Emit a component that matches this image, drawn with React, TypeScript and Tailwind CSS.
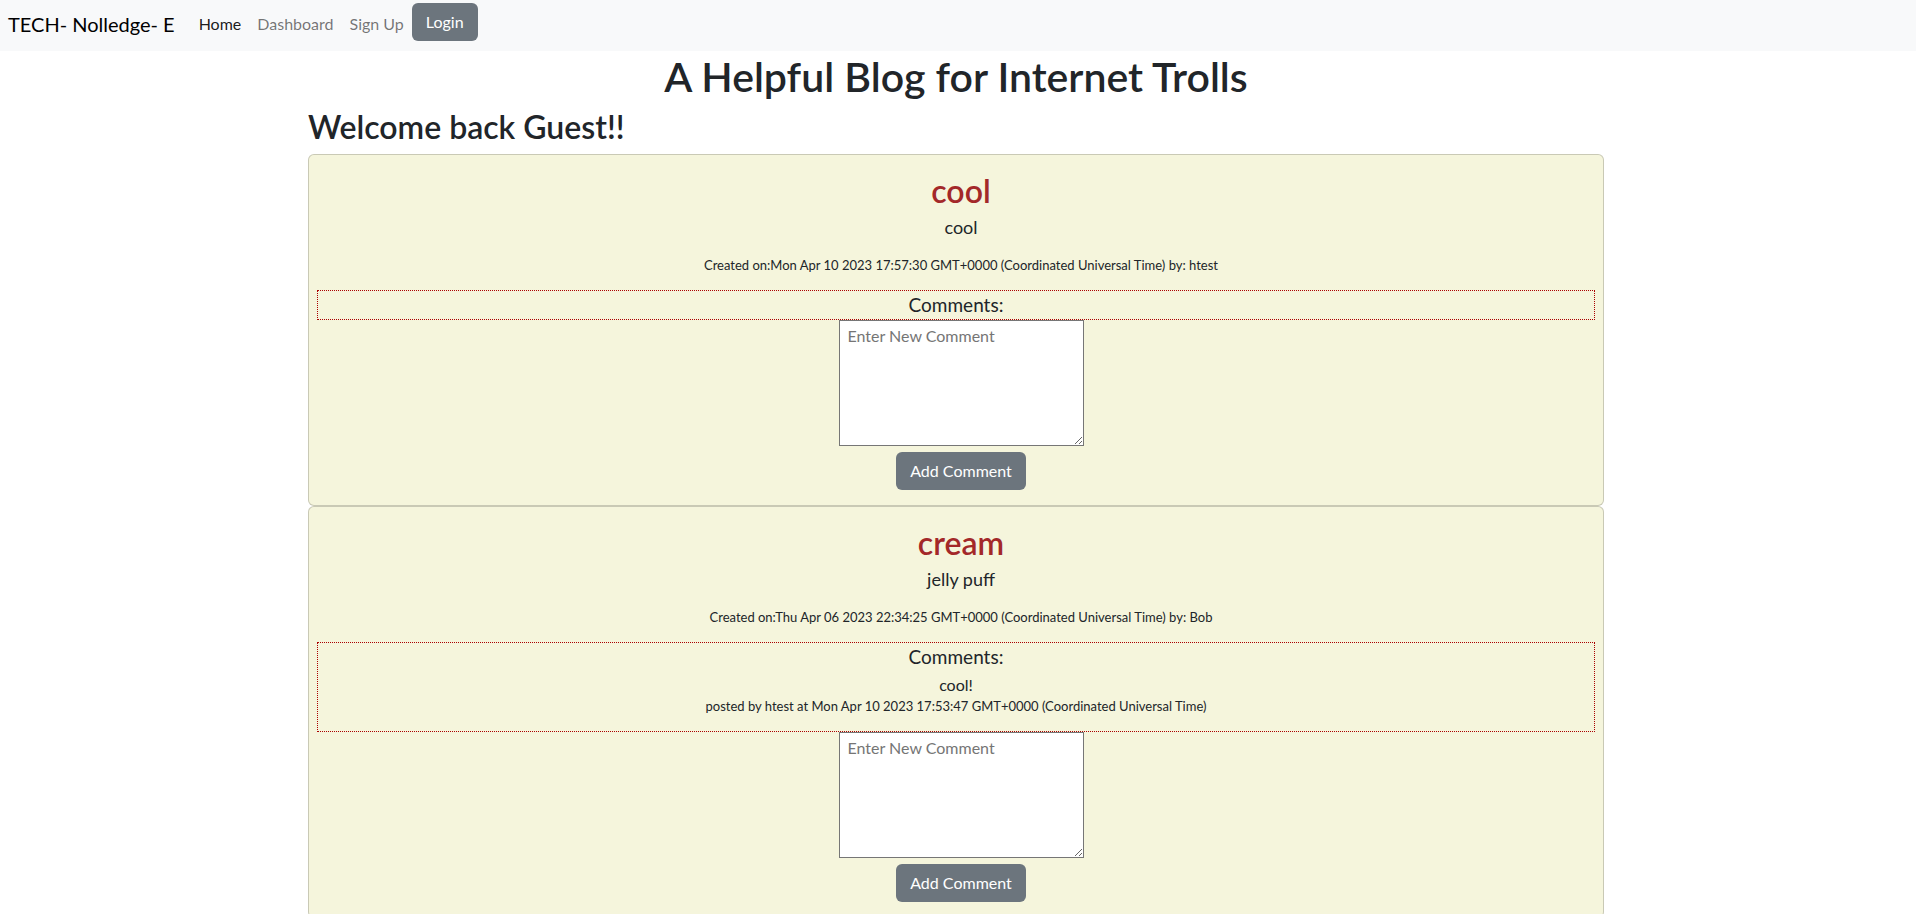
import React from "react";

type Comment = {
  body: string;
  author: string;
  date: string;
};

type Post = {
  id: number;
  title: string;
  body: string;
  created: string;
  author: string;
  comments: Comment[];
};

const posts: Post[] = [
  {
    id: 1,
    title: "cool",
    body: "cool",
    created: "Mon Apr 10 2023 17:57:30 GMT+0000 (Coordinated Universal Time)",
    author: "htest",
    comments: [],
  },
  {
    id: 2,
    title: "cream",
    body: "jelly puff",
    created: "Thu Apr 06 2023 22:34:25 GMT+0000 (Coordinated Universal Time)",
    author: "Bob",
    comments: [
      {
        body: "cool!",
        author: "htest",
        date: "Mon Apr 10 2023 17:53:47 GMT+0000 (Coordinated Universal Time)",
      },
    ],
  },
];

function Navbar() {
  return (
    <nav className="flex items-center bg-[#f8f9fa] px-2 pt-[3px] pb-[10px]">
      <a href="#" className="mt-1 mr-4 text-[20px] leading-[30px] text-black">
        TECH- Nolledge- E
      </a>
      <a href="#" className="mt-1 px-2 text-base leading-6 text-black/90">
        Home
      </a>
      <a href="#" className="mt-1 px-2 text-base leading-6 text-black/55">
        Dashboard
      </a>
      <a href="#" className="mt-1 px-2 text-base leading-6 text-black/55">
        Sign Up
      </a>
      <button className="h-[38px] rounded-md bg-[#6c757d] px-[14px] text-base leading-6 text-white">
        Login
      </button>
    </nav>
  );
}

function PostCard({ post }: { post: Post }) {
  return (
    <div className="rounded-md border border-black/[0.175] bg-[#f5f5dc] px-2 pt-[17px] pb-[15px] text-center">
      {/* post header */}
      <div className="pl-[10px]">
        <h2 className="mb-[5px] text-[32px] leading-[38px] font-semibold text-[#a32829]">
          {post.title}
        </h2>
        <p className="mb-[17px] text-[18px] leading-6">{post.body}</p>
        <p className="mb-4 text-[13px] leading-[18px]">
          Created on:{post.created} by: {post.author}
        </p>
      </div>

      {/* comments */}
      <div className="border border-dotted border-[#a00]">
        <h5 className="text-[19px] leading-[28px]">Comments:</h5>
        {post.comments.map((c, i) => (
          <div key={i} className="mb-4 pt-[2px]">
            <p className="text-base leading-6">{c.body}</p>
            <p className="text-[13px] leading-[18px]">
              posted by {c.author} at {c.date}
            </p>
          </div>
        ))}
      </div>

      <form className="flex flex-col items-center pl-[10px]">
        <textarea
          placeholder="Enter New Comment"
          className="block h-[126px] w-[245px] resize border border-[#767676] bg-white px-2 py-[3px] text-base leading-6 placeholder:text-[#757575]"
        />
        <button
          type="button"
          className="mt-[6px] h-[38px] rounded-md bg-[#6c757d] px-[14px] text-base leading-6 text-white"
        >
          Add Comment
        </button>
      </form>
    </div>
  );
}

export default function App() {
  return (
    <div className="min-h-screen bg-white font-['Segoe_UI',Lato,sans-serif] text-[#212529]">
      <Navbar />
      <div className="mx-auto w-[1296px] -translate-x-[2px]">
        <h1 className="mt-[2px] mb-[7px] text-center text-[41px] leading-[48px] font-semibold">
          A Helpful Blog for Internet Trolls
        </h1>
        <h2 className="mb-2 text-[32px] leading-[38px] font-semibold">Welcome back Guest!!</h2>
        <div className="flex flex-col">
          {posts.map((p) => (
            <PostCard key={p.id} post={p} />
          ))}
        </div>
      </div>
    </div>
  );
}
